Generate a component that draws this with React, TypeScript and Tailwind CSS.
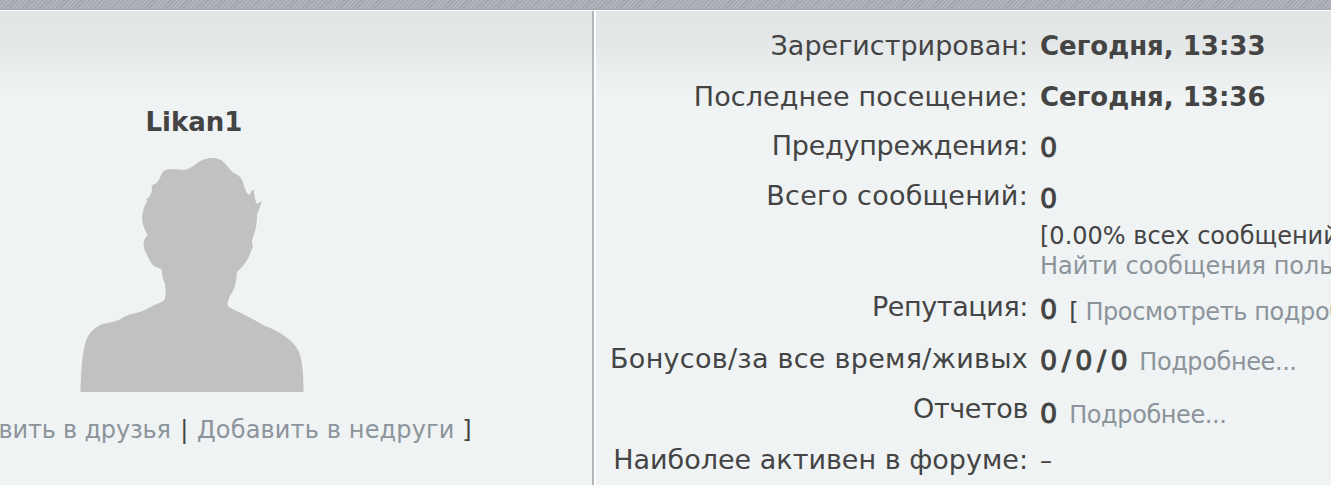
const zero = "text-[27px] font-normal leading-[38px] [-webkit-text-stroke:1px_#444444]";
const bold = "text-[26px] font-bold leading-[38px]";
const link = "text-[24px] text-[#8c949b] tracking-[-0.4px] whitespace-nowrap";

type Row = { label: string; labelClass: string; h: string; valueClass?: string; value: React.ReactNode };

const rows: Row[] = [
  { label: "Зарегистрирован:", labelClass: "", h: "h-[51px]", value: <b className={bold}>Сегодня, 13:33</b> },
  { label: "Последнее посещение:", labelClass: "tracking-[0.1px]", h: "h-[50px]", value: <b className={bold}>Сегодня, 13:36</b> },
  { label: "Предупреждения:", labelClass: "tracking-[-0.27px] -mt-px", h: "h-[51px]", valueClass: "pt-px", value: <b className={zero}>0</b> },
  {
    label: "Всего сообщений:",
    labelClass: "tracking-[0.25px] -mt-[2px]",
    h: "h-[109px]",
    valueClass: "pt-px flex-col",
    value: (
      <>
        <b className={zero}>0</b>
        <div className="-ml-px mt-[3px] text-[24px] leading-[30px] whitespace-nowrap">[0.00% всех сообщений форума]</div>
        <div className="-ml-px text-[24px] leading-[30px] text-[#8c949b] whitespace-nowrap">Найти сообщения пользователя</div>
      </>
    ),
  },
  {
    label: "Репутация:",
    labelClass: "tracking-[-0.4px]",
    h: "h-[52px]",
    valueClass: "pt-[3px] gap-3 !items-start",
    value: (
      <>
        <b className={zero}>0</b>
        <span className="whitespace-nowrap pt-[2px] text-[24px] leading-[38px] tracking-[-0.4px]">
          [ <span className="text-[#8c949b]">Просмотреть подробнее</span>
        </span>
      </>
    ),
  },
  {
    label: "Бонусов/за все время/живых",
    labelClass: "tracking-[0.27px]",
    h: "h-[53px]",
    valueClass: "pt-[2px] gap-[7px]",
    value: (
      <>
        <b className={`${zero} tracking-[4.5px]`}>0/0/0</b>
        <span className={link}>Подробнее...</span>
      </>
    ),
  },
  {
    label: "Отчетов",
    labelClass: "tracking-[-0.4px] -mt-[3px]",
    h: "h-[50px]",
    valueClass: "pt-[2px] gap-3",
    value: (
      <>
        <b className={zero}>0</b>
        <span className={link}>Подробнее...</span>
      </>
    ),
  },
  { label: "Наиболее активен в форуме:", labelClass: "-mt-[2px]", h: "h-[50px]", valueClass: "-mt-px", value: <span className="text-[24px] leading-[38px]">–</span> },
];

export default function App() {
  return (
    <div className="h-[485px] w-[1331px] overflow-hidden bg-[#eff3f4] text-[#444444] font-['DejaVu_Sans',sans-serif]">
      <div className="h-[8px] bg-[repeating-linear-gradient(135deg,#9ea4ab_0px,#9ea4ab_1px,#b1b5ba_1px,#b1b5ba_3px)]" />
      <div className="h-[2px] bg-[#a6abb3]" />
      <div className="h-px bg-white" />
      <div className="flex h-[474px] bg-[linear-gradient(#e2e5e6_0px,#e4e7e8_30px,#eff3f4_85px,#eff3f4_100%)]">
        <div className="w-[592px] overflow-hidden">
          <div className="flex w-[388px] flex-col items-center pt-[91px]">
            <div className="text-[26px] font-bold leading-[40px] whitespace-nowrap">Likan1</div>
            <svg viewBox="60 50 670 705" className="mt-[15px] mr-[4px] h-[235px] w-[224px] shrink-0">
              <path
                fill="#c1c1c1"
                d="M60 755C62 700 65 650 72 620C80 585 95 565 125 552C150 545 170 545 190 530C215 518 240 518 265 503C285 492 300 488 312 480C318 465 316 445 314 430C308 420 305 400 303 385C285 382 272 372 266 355C258 340 248 325 250 305C252 295 258 290 262 285C252 265 245 250 245 230C247 210 253 195 262 180L255 180C265 172 272 165 275 150C272 140 275 132 285 130C295 125 300 110 305 98C315 85 335 85 360 88C385 92 400 75 420 62C440 52 465 50 480 58C495 65 505 85 520 98C540 105 548 120 552 140C558 155 562 165 568 162C572 155 575 145 580 150C582 165 585 185 590 190C596 188 600 185 605 182C602 195 595 210 590 222C590 245 588 265 580 285C575 300 572 305 578 318C570 340 560 370 530 395C528 420 525 445 510 465C503 480 500 490 503 498C530 515 570 530 610 555C650 570 680 590 700 610C720 630 725 660 728 700L730 755Z"
              />
            </svg>
            <div className="mt-[20px] ml-[3px] whitespace-nowrap text-[24px] leading-[36px]">
              <span>[ </span>
              <span className="text-[#8c949b] tracking-[-0.2px]">Добавить в друзья</span>
              <span className="pl-[2px] pr-px"> | </span>
              <span className="text-[#8c949b] tracking-[0.15px]">Добавить в недруги</span>
              <span> ]</span>
            </div>
          </div>
        </div>
        <div className="w-[2px] bg-[#b3b7bb]" />
        <div className="w-[2px] bg-white" />
        <div className="min-w-0 flex-1 overflow-hidden pt-[16px]">
          {rows.map((r) => (
            <div key={r.label} className={`flex items-start gap-3 ${r.h}`}>
              <div className={`w-[432px] shrink-0 text-right text-[27px] leading-[38px] whitespace-nowrap ${r.labelClass}`}>{r.label}</div>
              <div className={`flex items-baseline ${r.valueClass ?? ""}`}>{r.value}</div>
            </div>
          ))}
        </div>
      </div>
    </div>
  );
}
